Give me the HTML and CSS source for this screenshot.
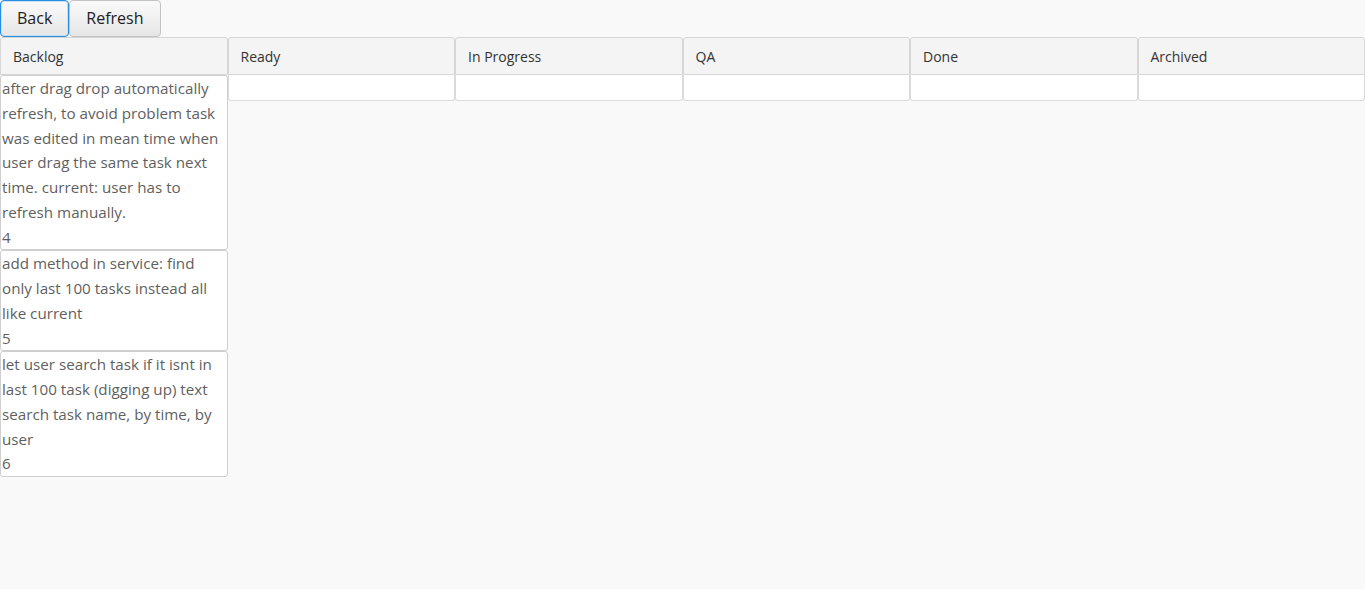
FILE: index.html
```html
<!DOCTYPE html>
<html lang="en">
<head>
    <meta charset="UTF-8" />
    <title>Board</title>
    <link rel="stylesheet" href="styles.css">
</head>
<body>

    <!-- Toolbar -->
    <div class="toolbar">
        <button class="btn focused">Back</button>
        <button class="btn">Refresh</button>
    </div>

    <!-- Board columns -->
    <div class="board">
        <div class="column">
            <div class="column-head">Backlog</div>
            <div class="cards">
                <div class="card">
                    <p>after drag drop automatically refresh, to avoid problem task was edited in mean time when user drag the same task next time. current: user has to refresh manually.</p>
                    <span>4</span>
                </div>
                <div class="card">
                    <p>add method in service: find only last 100 tasks instead all like current</p>
                    <span>5</span>
                </div>
                <div class="card">
                    <p>let user search task if it isnt in last 100 task (digging up) text search task name, by time, by user</p>
                    <span>6</span>
                </div>
            </div>
        </div>
        <div class="column">
            <div class="column-head">Ready</div>
            <div class="empty"></div>
        </div>
        <div class="column">
            <div class="column-head">In Progress</div>
            <div class="empty"></div>
        </div>
        <div class="column">
            <div class="column-head">QA</div>
            <div class="empty"></div>
        </div>
        <div class="column">
            <div class="column-head">Done</div>
            <div class="empty"></div>
        </div>
        <div class="column">
            <div class="column-head">Archived</div>
            <div class="empty"></div>
        </div>
    </div>

</body>
</html>
```

FILE: styles.css
```css
body {
  font-family: 'Open Sans', sans-serif;
  background-color: #f9f9f9;
  color: #333;
  margin: 0;
  padding: 0;
}

.toolbar {
  display: flex;
  height: 37px;
}
.btn {
  font-family: 'Open Sans', sans-serif;
  font-size: 16px;
  color: #222;
  background: linear-gradient(#fafafa, #e6e6e6);
  border: 1px solid #c2c2c2;
  border-radius: 4px;
  padding: 0 16px 2px;
  height: 37px;
  margin: 0;
  cursor: pointer;
}
.btn.focused {
  border-color: #2a8ee0;
  box-shadow: inset 0 0 0 1px #c8e0f4;
}

/* Columns */
.board {
  display: grid;
  grid-template-columns: repeat(6, 1fr);
  align-items: start;
}
.column {
  display: flex;
  flex-direction: column;
}
.column-head {
  height: 36px;
  line-height: 38px;
  padding-left: 12px;
  font-size: 14px;
  color: #333;
  background: #f4f4f4;
  border: 1px solid #d6d6d6;
  border-radius: 3px 3px 0 0;
}
.empty {
  height: 25px;
  background: #fff;
  border: 1px solid #dadada;
  border-top: none;
  border-radius: 0 0 3px 3px;
}

/* Cards */
.cards {
  display: flex;
  flex-direction: column;
}
.card {
  background: #fff;
  border: 1px solid #cfcfcf;
  border-radius: 3px;
  padding: 0 3px 0 1px;
  font-size: 15.2px;
  line-height: 24.75px;
  color: #5f5f5f;
}
.card p {
  margin: 0;
}
.card span {
  display: block;
}
```
